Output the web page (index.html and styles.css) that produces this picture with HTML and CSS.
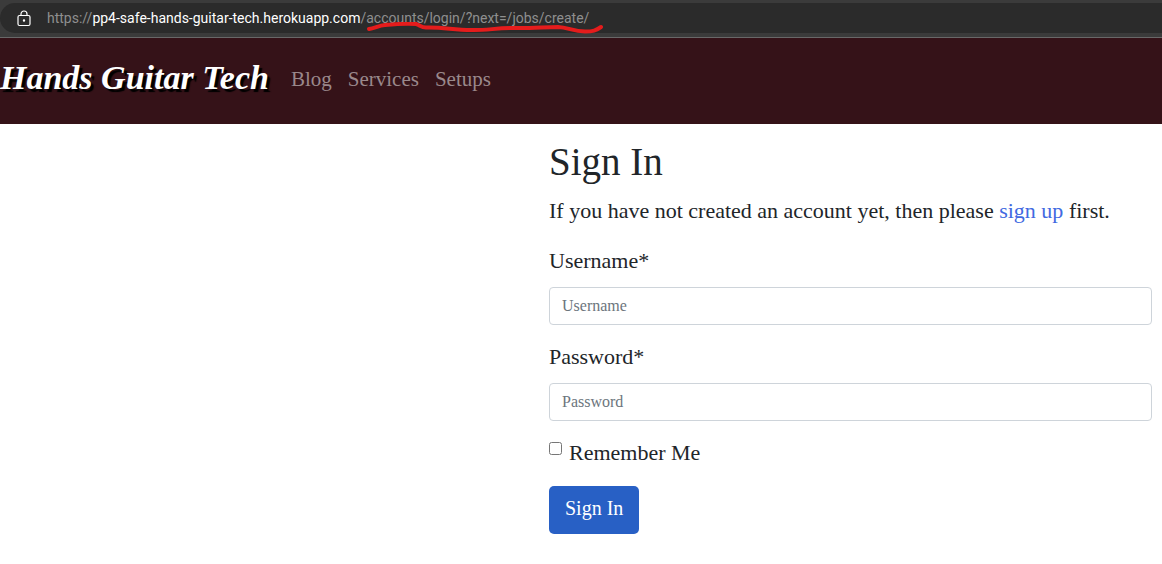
FILE: index.html
```html
<!DOCTYPE html>
<html lang="en">
<head>
<meta charset="utf-8">
<meta name="viewport" content="width=device-width, initial-scale=1">
<title>Sign In</title>
<link rel="stylesheet" href="styles.css">
</head>
<body>
<div class="browser-bar">
  <div class="address">
    <svg class="lock" viewBox="0 0 14 17" aria-hidden="true"><rect x="1" y="5.500" width="12" height="10" rx="1.500"/><path d="M4 5.500V4a3 3 0 0 1 6 0v1.500"/><circle cx="7" cy="10.500" r=".6"/></svg>
    <div class="url"><span>https://</span><span class="host">pp4-safe-hands-guitar-tech.herokuapp.com</span><span class="path">/accounts/login/?next=/jobs/create/<svg class="mark" viewBox="0 0 240 14" aria-hidden="true"><path d="M5 7C11 6 15 3.500 21 3C32 2 44 1.500 52 2C56 3 57 5.500 62 5.500C80 5 89 8 107 8C122 8.500 132 6 150 6C166 6.500 181 5 194 5C204 5.500 209 9 221 9.500C229 9.500 232 8.500 237 5"/></svg></span></div>
  </div>
</div>
<header class="navbar">
  <a class="brand" href="#">Hands Guitar Tech</a>
  <nav class="links">
    <a href="#">Blog</a>
    <a href="#">Services</a>
    <a href="#">Setups</a>
  </nav>
</header>
<main class="page">
  <section class="signin">
    <h1>Sign In</h1>
    <p class="intro">If you have not created an account yet, then please <a href="#">sign up</a> first.</p>
    <form>
      <div class="field">
        <label for="username">Username*</label>
        <input id="username" type="text" placeholder="Username">
      </div>
      <div class="field">
        <label for="password">Password*</label>
        <input id="password" type="password" placeholder="Password">
      </div>
      <div class="remember">
        <input id="remember" type="checkbox">
        <label for="remember">Remember Me</label>
      </div>
      <button type="submit">Sign In</button>
    </form>
  </section>
</main>
</body>
</html>
```
FILE: styles.css
```css
* { box-sizing: border-box; }
body {
  margin: 0;
  background: #fff;
  color: #212529;
  font-family: "Liberation Serif", serif;
  font-size: 22px;
  line-height: 32px;
  overflow-x: hidden;
}
a { text-decoration: none; }
.browser-bar {
  padding: 3px 0 4px;
  background: #3b3b3b;
  border-bottom: 1px solid #686868;
}
.address {
  display: flex;
  align-items: center;
  gap: 16px;
  height: 30px;
  padding-left: 17px;
  background: #2b2b2b;
  border-radius: 15px 0 0 15px;
}
.lock {
  width: 14px;
  height: 17px;
  fill: none;
  stroke: #fff;
  stroke-width: 1.2;
}
.url {
  color: #8f8f8f;
  font: 14px/20px Roboto, sans-serif;
  white-space: nowrap;
}
.host { color: #fff; }
.path { position: relative; }
.mark {
  position: absolute;
  left: 4px;
  top: 12px;
  width: 240px;
  height: 14px;
  fill: none;
  stroke: #e51c1c;
  stroke-width: 4;
  stroke-linecap: round;
}
.navbar {
  display: flex;
  align-items: center;
  gap: 22px;
  height: 86px;
  padding-bottom: 4px;
  background: #351218;
  white-space: nowrap;
}
.brand {
  padding-bottom: 2px;
  color: #fff;
  font-size: 34px;
  line-height: 48px;
  font-style: italic;
  font-weight: 700;
  text-shadow: 3px 3px 1px #000;
}
.links {
  display: flex;
  gap: 16px;
  font-size: 21px;
}
.links a { color: #9a888b; }
.page {
  display: grid;
  grid-template-columns: 549fr 603fr;
  padding: 15px 10px 30px 0;
}
.signin { grid-column: 2; }
h1 {
  margin: 0 0 10px;
  font-size: 39px;
  line-height: 46px;
  font-weight: 400;
}
.intro { margin: 0 0 18px; }
.intro a { color: #4169e1; }
.field { margin-bottom: 16px; }
.field label {
  display: block;
  margin-bottom: 10px;
}
.field input {
  display: block;
  width: 100%;
  height: 38px;
  padding: 6px 12px;
  border: 1px solid #ced4da;
  border-radius: 4px;
  background: #fff;
  font: 16px/24px "Liberation Serif", serif;
}
.field input::placeholder { color: #6c757d; opacity: 1; }
.remember {
  display: flex;
  gap: 7px;
  margin-bottom: 17px;
}
.remember input {
  width: 13px;
  height: 13px;
  margin: 5px 0 0;
}
button {
  padding: 6px 16px 10px;
  border: 0;
  border-radius: 5px;
  background: #2860c5;
  color: #fff;
  font: 20px/32px "Liberation Serif", serif;
}
```
